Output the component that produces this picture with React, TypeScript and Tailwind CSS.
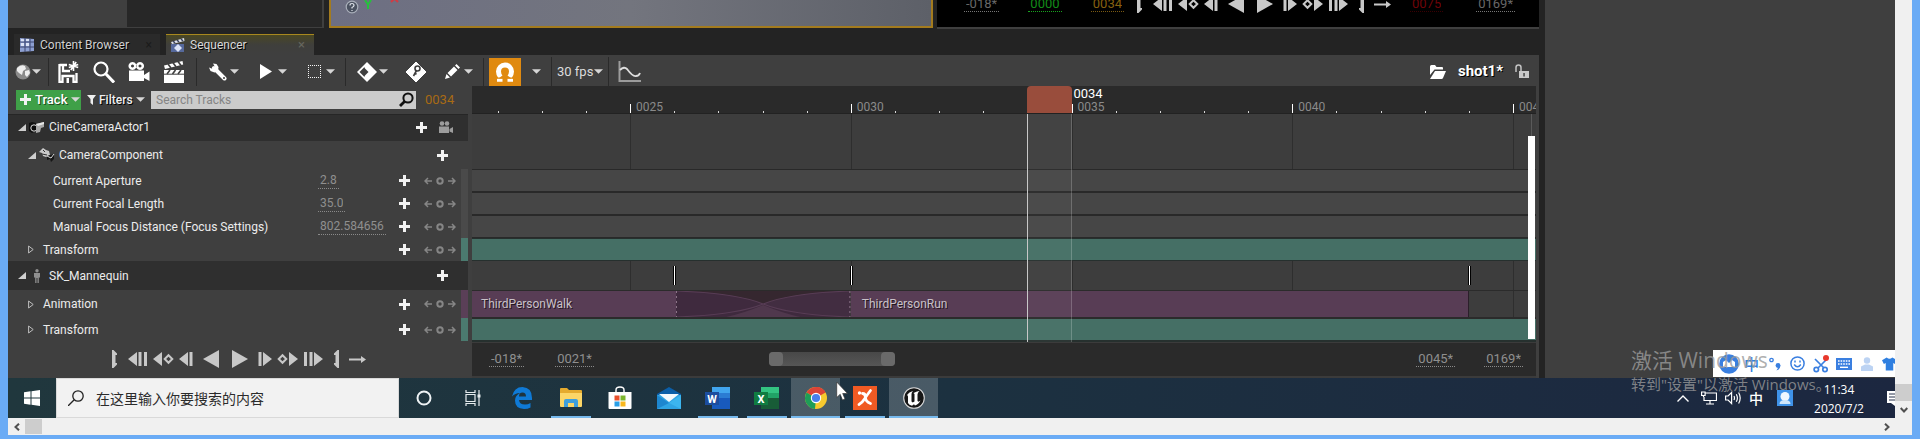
import type { ReactNode } from "react";

const VIEW_START = 21.42;
const VIEW_FRAMES = 24.1;
const pct = (frame: number) => `${((frame - VIEW_START) / VIEW_FRAMES) * 100}%`;
const span = (frames: number) => `${(frames / VIEW_FRAMES) * 100}%`;

const FRAMES = Array.from({ length: 24 }, (_, i) => 22 + i);

/* ---------- small shared pieces ---------- */

function Caret() {
  return (
    <svg className="h-[5px] w-[9px] shrink-0" viewBox="0 0 10 5" fill="#d6d6d6">
      <path d="M0 0h10L5 5z" />
    </svg>
  );
}

function Plus() {
  return (
    <svg className="h-[11px] w-[11px] shrink-0" viewBox="0 0 11 11" fill="#f2f2f2">
      <path d="M4 0h3v4h4v3H7v4H4V7H0V4h4z" />
    </svg>
  );
}

function Separator() {
  return <div className="mx-[2px] h-7 w-px shrink-0 bg-[#2a2a2a]" />;
}

function ToolButton({ label, children }: { label: string; children: ReactNode }) {
  return (
    <button aria-label={label} className="flex h-full w-[35px] shrink-0 items-center justify-center">
      {children}
    </button>
  );
}

function SplitButton({ label, children }: { label: string; children: ReactNode }) {
  return (
    <button aria-label={label} className="flex h-full w-12 shrink-0 items-center gap-px pl-2">
      <span className="flex w-[22px] justify-center">{children}</span>
      <Caret />
    </button>
  );
}

function TimeField({ label, value, tone }: { label: string; value: string; tone: string }) {
  return (
    <input
      aria-label={label}
      defaultValue={value}
      className={`field-sizing-content h-4 border-b border-dotted bg-transparent px-[2px] text-[13px] leading-[14px] outline-none ${tone}`}
    />
  );
}

/* ---------- transport ---------- */

function TransportButton({ label, children }: { label: string; children: ReactNode }) {
  return (
    <button aria-label={label} className="block shrink-0">
      {children}
    </button>
  );
}

function Bracket({ flip }: { flip?: boolean }) {
  return (
    <svg className={`block h-[18px] w-[6px] ${flip ? "-scale-x-100" : ""}`} viewBox="0 0 6 18" fill="#c8c8c8">
      <path d="M0 0h1.500L5 3.500v1.500H3.500v8H5v1.500L1.500 18H0z" />
    </svg>
  );
}

function JumpIcon({ flip }: { flip?: boolean }) {
  return (
    <svg className={`block h-[18px] w-5 ${flip ? "-scale-x-100" : ""}`} viewBox="0 0 20 18" fill="#c8c8c8">
      <path d="M0 9L9 2v14zM10.500 2h3v14h-3zM16 2h3v14h-3z" />
    </svg>
  );
}

function KeyStepIcon({ flip }: { flip?: boolean }) {
  return (
    <svg className={`block h-[18px] w-[21px] ${flip ? "-scale-x-100" : ""}`} viewBox="0 0 21 18" fill="#c8c8c8">
      <path d="M0 9l9-7v14z" />
      <path d="M15.500 5.200L19.300 9l-3.800 3.800L11.700 9z" fill="none" stroke="#c8c8c8" strokeWidth="2" />
    </svg>
  );
}

function StepIcon({ flip }: { flip?: boolean }) {
  return (
    <svg className={`block h-[18px] w-[14px] ${flip ? "-scale-x-100" : ""}`} viewBox="0 0 14 18" fill="#c8c8c8">
      <path d="M0 9l9-7v14zM10.500 2h3v14h-3z" />
    </svg>
  );
}

function PlayIcon({ flip }: { flip?: boolean }) {
  return (
    <svg className={`block h-[18px] w-4 ${flip ? "-scale-x-100" : ""}`} viewBox="0 0 16 18" fill="#c8c8c8">
      <path d="M0 0l16 9L0 18z" />
    </svg>
  );
}

function Transport() {
  return (
    <div className="flex shrink-0 items-center gap-[10px]">
      <TransportButton label="Set range start"><Bracket /></TransportButton>
      <div className="flex gap-[5px]">
        <TransportButton label="Jump to front"><JumpIcon /></TransportButton>
        <TransportButton label="Previous key"><KeyStepIcon /></TransportButton>
        <TransportButton label="Step back"><StepIcon /></TransportButton>
      </div>
      <TransportButton label="Play reverse"><PlayIcon flip /></TransportButton>
      <div className="ml-[3px]">
        <TransportButton label="Play"><PlayIcon /></TransportButton>
      </div>
      <div className="flex gap-[5px]">
        <TransportButton label="Step forward"><StepIcon flip /></TransportButton>
        <TransportButton label="Next key"><KeyStepIcon flip /></TransportButton>
        <TransportButton label="Jump to end"><JumpIcon flip /></TransportButton>
      </div>
      <TransportButton label="Set range end"><Bracket flip /></TransportButton>
      <TransportButton label="No looping">
        <svg className="block h-[18px] w-[17px]" viewBox="0 0 17 18" fill="#c8c8c8">
          <path d="M0 8.500h12V6l5 3.500-5 3.500v-2.500H0z" />
        </svg>
      </TransportButton>
    </div>
  );
}

/* ---------- upper editor panels ---------- */

function UpperPanels() {
  return (
    <div className="flex h-[29px] overflow-hidden bg-[#232323]">
      <div className="h-7 w-[119px] shrink-0 bg-[#3f3f3f]" />
      <div className="h-7 w-[197px] shrink-0 border-r-2 border-b border-[#3f3f3f] bg-[#272727]" />
      <div className="ml-[5px] flex h-7 w-[604px] shrink-0 items-start gap-[5px] border-x-2 border-b-2 border-[#a37b1e] bg-linear-to-r from-[#6d6f83] via-[#73757e] to-[#5d6068] pl-[14px]">
        <svg className="h-[14px] w-[14px]" viewBox="0 0 14 14">
          <circle cx="7" cy="7" r="5.800" fill="#4b5261" stroke="#a9afba" strokeWidth="1.200" />
          <path d="M5 5.500q0-2 2-2t2 2q0 1-2 2v1M7 10v1" stroke="#dfe3ea" fill="none" strokeWidth="1.200" />
        </svg>
        <svg className="h-3 w-10" viewBox="0 0 40 12" fill="none">
          <path d="M1 0l3 4.500L7 0M4 4v5" stroke="#25c13c" strokeWidth="2" />
          <path d="M27 2l3-3M34 2l-3-3" stroke="#d23b43" strokeWidth="2" />
        </svg>
      </div>
      <div className="ml-[4px] flex h-[29px] w-[603px] shrink-0 items-start border-r border-b-2 border-[#3f3f3f] bg-black">
        <div className="-mt-1 flex w-[200px] shrink-0 justify-between pl-[27px] pr-[13px]">
          <TimeField label="Working range start" value="-018*" tone="border-[#777] text-[#686868]" />
          <TimeField label="Playback start" value="0000" tone="border-[#18a51e] text-[#128c18]" />
          <TimeField label="Current frame" value="0034" tone="border-[#7b5a12] text-[#86610f]" />
        </div>
        <div className="-mt-[5px]">
          <Transport />
        </div>
        <div className="-mt-1 flex flex-1 justify-between pl-[19px] pr-[24px]">
          <TimeField label="Playback end" value="0075" tone="border-[#3a0003] text-[#6f0408]" />
          <TimeField label="Working range end" value="0169*" tone="border-[#777] text-[#686868]" />
        </div>
      </div>
    </div>
  );
}

/* ---------- tabs ---------- */

function Tabs() {
  return (
    <div className="flex h-[26px] items-end gap-[6px] bg-[#232323] pl-[6px] pt-[5px] text-xs" role="tablist">
      <button role="tab" aria-selected="false" className="flex h-[21px] w-[146px] items-center bg-[#2a2a2a] pl-[5px] text-[#d0d0d0]">
        <svg className="mr-[5px] h-4 w-4" viewBox="0 0 16 16">
          <path d="M1 1l14 1v12L1 15z" fill="#8d9fd0" />
          <path d="M1 5h14M1 10h14M6 1v14M11 1v14" stroke="#3c4670" strokeWidth="1" />
          <path d="M2 2l3 .2v2H2zM7 2h3v2H7zM2 6h3v3H2zM7 6h3v3H7z" fill="#dbe2f5" />
        </svg>
        <span className="[text-shadow:1px_1px_0_#000]">Content Browser</span>
        <span className="ml-auto pr-2 text-[#1b1b1b]">×</span>
      </button>
      <button role="tab" aria-selected="true" className="flex h-[21px] w-[148px] items-center border-t border-[#a8881f] bg-linear-to-b from-[#4a4722] via-[#3f3f3c] to-[#3f3f3f] pl-[4px] text-[#d8d8d8]">
        <svg className="mr-[5px] h-4 w-[15px]" viewBox="0 0 15 16">
          <path d="M1 5l13-4 .5 3L2 7z" fill="#dfe3ee" />
          <path d="M3 4l2 2M7 3l2 2M11 2l2 2" stroke="#39415c" strokeWidth="1.500" />
          <path d="M1 7h13v8H1z" fill="#56699c" />
          <path d="M8 7l4 4-4 4-4-4z" fill="#dbe4f8" />
        </svg>
        <span className="[text-shadow:1px_1px_0_#000]">Sequencer</span>
        <span className="ml-auto pr-[9px] text-[13px] text-[#66665e]">×</span>
      </button>
    </div>
  );
}

/* ---------- sequencer toolbar ---------- */

function Toolbar() {
  return (
    <div className="flex h-[31px] items-center bg-[#3f3f3f] pt-[2px] text-[13px] text-[#dcdcdc]">
      <button aria-label="World" className="flex h-full w-[38px] shrink-0 items-center gap-px pl-[7px]">
        <svg className="h-4 w-4" viewBox="0 0 16 16">
          <circle cx="8" cy="8" r="7.500" fill="#8a8a8a" />
          <path d="M2 4q4-4 8-2l1 3-3 2-1 4-3-2-2-2zM10 7l4-1 1 3-3 4-2-2z" fill="#ededed" />
        </svg>
        <Caret />
      </button>
      <Separator />
      <ToolButton label="Save sequence">
        <svg className="h-[22px] w-[21px]" viewBox="0 0 21 22">
          <path d="M1.500 4H9M1.500 3v18h3v-6h11v6h3v-9M5 4v6h7" fill="none" stroke="#fff" strokeWidth="2.300" />
          <path d="M8.500 17h2.500v5H8.500z" fill="#fff" />
          <path d="M15.500 0v10M10.800 3.500l9.400 3M20.200 3.500l-9.400 3M12.800 9l5.400-8" stroke="#fff" strokeWidth="1.600" />
        </svg>
      </ToolButton>
      <ToolButton label="Find in content browser">
        <svg className="h-[22px] w-[22px]" viewBox="0 0 22 22" fill="none" stroke="#fff">
          <circle cx="8" cy="8" r="6.500" strokeWidth="2.200" />
          <path d="M12.500 12.500L21 21.500" strokeWidth="3" />
        </svg>
      </ToolButton>
      <ToolButton label="Create camera">
        <svg className="h-5 w-[22px]" viewBox="0 0 22 20" fill="#fff">
          <path d="M4.500 0a4 4 0 1 0 .01 0zm0 2.500a1.500 1.500 0 1 1-.01 0zM12 0a4 4 0 1 0 .01 0zm0 2.500a1.500 1.500 0 1 1-.01 0z" fillRule="evenodd" />
          <path d="M1 8.500h15V19H1zM16 13l5.500-3.500V19L16 16z" />
        </svg>
      </ToolButton>
      <ToolButton label="Render movie">
        <svg className="h-[22px] w-5" viewBox="0 0 20 22">
          <path d="M0 9h20v13H0z" fill="#fff" />
          <path d="M0 4.500L18.500 0l.7 3.500L1 8z" fill="#fff" />
          <path d="M4 3l3 4M9 1.800l3 4M14 .6l3 4M3 13l3-4M8.500 13l3-4M14 13l3-4" stroke="#3f3f3f" strokeWidth="1.600" />
          <path d="M0 13.200h20" stroke="#3f3f3f" strokeWidth="1" />
        </svg>
      </ToolButton>
      <div className="w-[3px]" />
      <Separator />
      <SplitButton label="General options">
        <svg className="h-[18px] w-[18px]" viewBox="0 0 18 18">
          <path d="M5 5l10.500 10.500" stroke="#fff" strokeWidth="4" strokeLinecap="round" />
          <path d="M4 .5L7.500 1 9.500 4 9 8 5.500 9.500 1.500 8 0 4.500 4 6l2-2z" fill="#fff" />
          <circle cx="15" cy="15" r="1" fill="#3f3f3f" />
        </svg>
      </SplitButton>
      <SplitButton label="Playback options">
        <svg className="h-[15px] w-3" viewBox="0 0 12 15" fill="#fff"><path d="M0 0l12 7.500L0 15z" /></svg>
      </SplitButton>
      <SplitButton label="Selection range">
        <svg className="h-[13px] w-[13px]" viewBox="0 0 13 13" fill="none" stroke="#f5f5f5">
          <path d="M0 .5h13M0 12.500h13M.5 0v13M12.500 0v13" strokeDasharray="1 1" />
        </svg>
      </SplitButton>
      <Separator />
      <SplitButton label="Key options">
        <svg className="h-[22px] w-[22px] shrink-0" viewBox="0 0 22 22">
          <path d="M11 1l10 10-10 10L1 11z" fill="#fff" />
          <path d="M8.500 6v10L3.500 11z" fill="#3f3f3f" /><path d="M8 6.500l4.500 4.500L8 15.500z" fill="#3f3f3f" />
        </svg>
      </SplitButton>
      <ToolButton label="Auto key">
        <svg className="ml-1 h-[22px] w-[22px] shrink-0" viewBox="0 0 22 22">
          <path d="M11 1l10 10-10 10L1 11z" fill="#fff" stroke="#fff" strokeLinejoin="round" />
          <circle cx="12.500" cy="7.500" r="2.500" fill="none" stroke="#3f3f3f" strokeWidth="1.600" />
          <path d="M11.500 9.500L8.500 15M9.500 12l2 1.200" stroke="#3f3f3f" strokeWidth="1.600" />
        </svg>
      </ToolButton>
      <div className="w-[2px]" />
      <SplitButton label="Edit options">
        <svg className="h-[15px] w-[15px]" viewBox="0 0 15 15" fill="#fff">
          <path d="M0 15l1.500-5 3.500 3.500zM2.500 9L9 2.500 12.500 6 6 12.500zM10 1.500L11.500 0 15 3.500 13.500 5z" />
        </svg>
      </SplitButton>
      <Separator />
      <button aria-label="Snapping" aria-pressed="true" className="ml-[3px] flex h-7 w-8 items-center justify-center self-end bg-[#e08a10]">
        <svg className="h-5 w-5" viewBox="0 0 20 20">
          <path d="M5.500 15Q3.500 12.500 3.500 9.500a6.500 6.500 0 0 1 13 0q0 3-2 5.500" fill="none" stroke="#fff" strokeWidth="5" />
          <path d="M2 18.200h5.500M12.500 18.200H18" stroke="#fff" strokeWidth="3" />
          <path d="M1 16h8M11 16h8" stroke="#e08a10" strokeWidth="1" />
        </svg>
      </button>
      <button aria-label="Snapping options" className="flex h-full w-[30px] items-center justify-center"><Caret /></button>
      <button className="flex h-full items-center gap-px border-x border-[#2a2a2a] px-[5px]">
        <span>30 fps</span>
        <Caret />
      </button>
      <button aria-label="Curve editor" className="ml-[9px]">
        <svg className="h-[21px] w-[23px]" viewBox="0 0 23 21" fill="none">
          <path d="M1.500 0v20H23" stroke="#9c9c9c" strokeWidth="2" />
          <path d="M2 9q4-4 7-1 6 8 9 7 3 0 4-3" stroke="#dedede" strokeWidth="1.800" />
        </svg>
      </button>
      <div className="ml-auto flex items-center gap-3 pr-[10px]">
        <button aria-label="Browse sequences">
          <svg className="block h-[14px] w-4" viewBox="0 0 16 14" fill="#fff">
            <path d="M0 1.500Q0 0 1.500 0H5l1.500 2H12q1 0 1 1v1.500H4.500L0 10z" />
            <path d="M5 6h11l-3 7q-.4 1-1.500 1H0z" />
          </svg>
        </button>
        <button className="text-[15px] font-bold text-white [text-shadow:1px_1px_0_#000]">shot1*</button>
        <button aria-label="Lock sequence">
          <svg className="block h-[15px] w-[14px]" viewBox="0 0 14 15">
            <path d="M1 8V3.500Q1 1 3.500 1T6 3.500V8" fill="none" stroke="#c4c4c4" strokeWidth="1.500" />
            <path d="M4 7h10v7H4z" fill="#c9c9c9" /><path d="M8.300 9h1.500v3.500H8.300z" fill="#444" />
          </svg>
        </button>
      </div>
    </div>
  );
}

/* ---------- outliner ---------- */

function FilterRow() {
  return (
    <div className="flex h-7 items-center bg-[#3f3f3f] pb-px pl-2 text-[13px]">
      <button className="flex h-5 w-[65px] items-center gap-[4px] bg-[#3fa048] pl-1 text-white [text-shadow:1px_1px_0_#1c4d20]">
        <Plus />
        <span className="font-medium">Track</span>
        <Caret />
      </button>
      <button className="ml-[6px] flex w-16 items-center gap-[3px] text-xs text-[#efefef] [text-shadow:1px_1px_0_#000]">
        <svg className="h-[10px] w-[9px] shrink-0" viewBox="0 0 9 10" fill="#efefef"><path d="M0 0h9L6 4v6L3.500 8V4z" /></svg>
        <span className="font-medium">Filters</span>
        <Caret />
      </button>
      <div className="flex h-[18px] flex-1 items-center bg-[#cbcbcb] pr-[2px]">
        <input aria-label="Search Tracks" placeholder="Search Tracks" className="h-full min-w-0 flex-1 bg-transparent pl-[5px] text-xs placeholder-[#858585] outline-none" />
        <svg className="h-[15px] w-[15px]" viewBox="0 0 15 15" fill="none" stroke="#111">
          <circle cx="9" cy="6" r="4.600" strokeWidth="2" />
          <path d="M5.800 9.200L1 14" strokeWidth="2.800" />
        </svg>
      </div>
      <span className="w-14 shrink-0 pl-[9px] text-[#a86a14]">0034</span>
    </div>
  );
}

function Expanded() {
  return <svg className="h-[7px] w-2 shrink-0" viewBox="0 0 8 7" fill="#cfcfcf"><path d="M8 0v7H0z" /></svg>;
}

function Collapsed() {
  return <svg className="h-[9px] w-[6px] shrink-0" viewBox="0 0 6 9" fill="none" stroke="#bdbdbd"><path d="M.6 1v7l4.600-3.500z" /></svg>;
}

function KeyNav() {
  return (
    <div className="flex w-8 shrink-0 justify-between">
      <button aria-label="Previous key">
        <svg className="block h-2 w-2" viewBox="0 0 8 8" fill="none" stroke="#868686" strokeWidth="1.500"><path d="M8 4H1M4 1L1 4l3 3" /></svg>
      </button>
      <button aria-label="Add key">
        <svg className="block h-2 w-2" viewBox="0 0 8 8" fill="none" stroke="#868686" strokeWidth="2"><circle cx="4" cy="4" r="2.700" /></svg>
      </button>
      <button aria-label="Next key">
        <svg className="block h-2 w-2" viewBox="0 0 8 8" fill="none" stroke="#868686" strokeWidth="1.500"><path d="M0 4h7M4 1l3 3-3 3" /></svg>
      </button>
    </div>
  );
}

function TrackRow({ name, value, height, strip, nested }: { name: string; value?: string; height: string; strip: string; nested?: boolean }) {
  return (
    <div className={`flex items-center ${height}`}>
      <div className={`flex w-[310px] shrink-0 items-center ${nested ? "pl-[45px]" : "gap-[9px] pl-5"}`}>
        {!nested && <Collapsed />}
        <span>{name}</span>
      </div>
      <div className="w-[81px] shrink-0">
        {value && (
          <input
            aria-label={name}
            defaultValue={value}
            className="field-sizing-content block h-4 border-b border-dotted border-[#8a8a8a] bg-transparent px-[2px] text-[#8f8f8f] outline-none"
          />
        )}
      </div>
      <button aria-label={`Add to ${name}`} className="mr-[14px]"><Plus /></button>
      <KeyNav />
      <div className={`ml-auto mr-1 w-[7px] self-stretch ${strip}`} />
    </div>
  );
}

function Outliner() {
  return (
    <div className="flex w-[464px] shrink-0 flex-col bg-[#3f3f3f] text-xs text-[#ececec]">
      <FilterRow />
      <div className="mr-1 flex h-[27px] items-center border-t border-[#262626] bg-[#2f2f2f] pb-[2px] pl-[10px]">
        <Expanded />
        <svg className="mx-[3px] h-3 w-4" viewBox="0 0 16 12">
          <path d="M0 2l3-1 4 1v8l-4 2-3-2z" fill="#111" /><circle cx="5" cy="7" r="3.200" fill="#0a0a0a" stroke="#ddd" />
          <path d="M7 3l8-2v5l-3 1-1 4-4 1z" fill="#a9a9a9" /><path d="M7 3l8-2v2L9 5z" fill="#e6e6e6" />
        </svg>
        <span className="pl-[1px]">CineCameraActor1</span>
        <button aria-label="Add to CineCameraActor1" className="ml-auto"><Plus /></button>
        <button aria-label="Lock viewport to camera" className="ml-3 mr-[15px]">
          <svg className="block h-3 w-[14px]" viewBox="0 0 14 12" fill="#9d9d9d">
            <circle cx="3" cy="2.500" r="2.300" /><circle cx="8" cy="2.500" r="2.300" /><path d="M0 5.500h10V12H0zM10.500 8L14 6v6l-3.500-1.500z" />
          </svg>
        </button>
      </div>
      <div className="mr-1 flex h-7 items-center pl-5">
        <Expanded />
        <svg className="mx-[3px] h-[14px] w-4" viewBox="0 0 16 14">
          <path d="M0 4l4-4 3 2 3 1 1 4-4 2-3-1-1-3z" fill="#c9c9c9" /><path d="M4 2l2 2M3 6l5 1" stroke="#333" />
          <path d="M8 8l7-2v5l-3 3-1-3-3 1z" fill="#161616" /><path d="M8 8l4 2 3-4" stroke="#ddd" fill="none" />
        </svg>
        <span className="pl-[1px]">CameraComponent</span>
        <button aria-label="Add to CameraComponent" className="ml-auto mr-5"><Plus /></button>
      </div>
      <TrackRow name="Current Aperture" value="2.8" height="h-[23px]" strip="bg-[#4a4a4a]" nested />
      <TrackRow name="Current Focal Length" value="35.0" height="h-[23px]" strip="bg-[#4a4a4a]" nested />
      <TrackRow name="Manual Focus Distance (Focus Settings)" value="802.584656" height="h-[23px]" strip="bg-[#4a4a4a]" nested />
      <TrackRow name="Transform" height="h-[23px]" strip="bg-[#4b7a6f]" />
      <div className="mr-1 flex h-[29px] items-center bg-[#2f2f2f] pl-[10px]">
        <Expanded />
        <svg className="ml-[7px] mr-2 h-[14px] w-2" viewBox="0 0 8 14" fill="#8f8f8f">
          <circle cx="4" cy="1.800" r="1.700" /><path d="M1 4h6v4.500H5.800V14H4.500V9h-1v5H2.200V8.500H1z" />
        </svg>
        <span>SK_Mannequin</span>
        <button aria-label="Add to SK_Mannequin" className="ml-auto mr-5"><Plus /></button>
      </div>
      <TrackRow name="Animation" height="h-[28px]" strip="bg-[#5a3f57]" />
      <TrackRow name="Transform" height="h-[23px]" strip="bg-[#4b7a6f]" />
      <div className="flex h-[37px] items-center pb-px pl-[104px]">
        <Transport />
      </div>
    </div>
  );
}

/* ---------- timeline ---------- */

function Ruler() {
  return (
    <div className="relative h-7 overflow-hidden border-b border-[#222] bg-[#2a2a2a]">
      {FRAMES.map((f) => (
        <div key={f} className="absolute bottom-0 flex items-end" style={{ left: pct(f) }}>
          <div className={f % 5 === 0 ? "h-[9px] w-px bg-white" : "h-[2px] w-px bg-[#d8d8d8]"} />
          {f % 5 === 0 && <span className="pl-[5px] text-xs leading-3 text-[#8a8a8a]">{f === 45 ? "004" : `00${f}`}</span>}
        </div>
      ))}
      <div className="absolute inset-y-0 flex rounded-t-sm bg-[#994d3c]" style={{ left: pct(34), width: span(1) }}>
        <span className="pl-[46px] text-[13px] leading-4 text-white">0034</span>
      </div>
    </div>
  );
}

function Tracks() {
  return (
    <div className="relative flex flex-col overflow-hidden bg-[#3d3d3d]">
      {[25, 30, 35, 40, 45].map((f) => (
        <div key={f} className="absolute inset-y-0 w-px bg-[#2e2e2e]" style={{ left: pct(f) }} />
      ))}
      <div className="h-[55px]" />
      <div className="relative h-[23px] border-y border-[#292929] bg-[#464646]" />
      <div className="relative h-[23px] border-y border-[#292929] bg-[#464646]" />
      <div className="relative h-[23px] border-y border-[#292929] bg-[#464646]" />
      <div className="relative h-[23px] border-y border-[#26302e] bg-[#456f65]" />
      <div className="relative h-[29px]">
        {[26, 30, 44].map((f) => (
          <div key={f} className="absolute top-[5px] h-[19px] w-[3px] -translate-x-px border-x border-black bg-white" style={{ left: pct(f) }} />
        ))}
      </div>
      <div className="relative h-[29px] border-t border-b-2 border-[#2b2b2b]">
        <div className="flex h-full items-center text-xs text-[#c9c1c8] [text-shadow:1px_1px_0_#241722]">
          <div className="flex h-full items-center bg-[#583d55] pl-[9px]" style={{ width: pct(26.05) }}>ThirdPersonWalk</div>
          <svg className="h-full" style={{ width: span(3.95) }} viewBox="0 0 174 26" preserveAspectRatio="none">
            <path d="M0 0h174v26H0z" fill="#422d41" />
            <path d="M0 0Q60 2 87 13T174 26H0z" fill="#3f2a3e" />
            <path d="M0 0Q55 1 87 13Q120 1 174 0z" fill="#35272f" />
            <path d="M50 26Q68 22 87 14Q106 22 124 26z" fill="#50384d" />
            <path d="M0 0Q60 2 87 13T174 26M174 0Q114 2 87 13T0 26" fill="none" stroke="#583d55" />
            <path d="M.5 0v26M173.500 0v26" stroke="#8c7488" strokeDasharray="2 3" />
          </svg>
          <div className="flex h-full items-center border-r border-[#2b1f2a] bg-[#583d55] pl-[11px]" style={{ width: span(14) }}>ThirdPersonRun</div>
        </div>
      </div>
      <div className="relative h-[23px] border-b-2 border-[#26302e] bg-[#456f65]" />
      <div className="absolute inset-y-0 border-l border-r border-l-[#c8c8c8] border-r-white/20 bg-white/[0.03]" style={{ left: pct(34), width: span(1) }} />
      <div className="absolute bottom-[3px] right-px top-0 flex w-[7px] flex-col items-center">
        <div className="h-[22px] w-px bg-[#5a5a5a]" />
        <div className="w-full flex-1 bg-white" />
      </div>
    </div>
  );
}

function RangeBar() {
  const tone = "border-[#8a8a8a] text-[#8f8f8f]";
  return (
    <div className="flex h-9 items-center border-b-2 border-t border-[#3b3b3b] bg-[#2a2a2a] pb-px pl-[17px] pr-[13px]">
      <div className="flex w-[280px] shrink-0 gap-[31px]">
        <TimeField label="Range start" value="-018*" tone={tone} />
        <TimeField label="View start" value="0021*" tone={tone} />
      </div>
      <div className="flex h-[14px] w-[126px] justify-between rounded-sm bg-linear-to-b from-[#484848] to-[#565656]">
        <div className="w-[14px] rounded-sm bg-[#6a6a6a]" />
        <div className="w-[14px] rounded-sm bg-[#6a6a6a]" />
      </div>
      <div className="ml-auto flex gap-[29px]">
        <TimeField label="View end" value="0045*" tone={tone} />
        <TimeField label="Range end" value="0169*" tone={tone} />
      </div>
    </div>
  );
}

/* ---------- taskbar ---------- */

function TaskItem({ label, mark, active, children }: { label: string; mark?: boolean; active?: boolean; children: ReactNode }) {
  return (
    <button aria-label={label} className={`flex h-10 w-[49px] shrink-0 flex-col items-center ${active ? "bg-white/20" : ""}`}>
      <span className="flex flex-1 items-center pt-[2px]">{children}</span>
      <span className={`h-[2px] ${mark ? "bg-[#76b9ed]" : ""} ${active ? "w-full" : "w-10"}`} />
    </button>
  );
}

function OfficeIcon({ letter, light, mid, dark, badge }: { letter: string; light: string; mid: string; dark: string; badge: string }) {
  return (
    <svg className="h-6 w-[26px]" viewBox="0 0 26 24">
      <path d="M7 1h18v6H7z" fill={light} /><path d="M7 7h18v5H7z" fill={mid} />
      <path d="M7 12h18v11H7z" fill={dark} />
      <path d="M0 6h14v13H0z" fill={badge} />
      <text x="7" y="16.500" textAnchor="middle" fill="#fff" fontSize="11" fontWeight="700" fontFamily="Roboto, sans-serif">{letter}</text>
    </svg>
  );
}

function Taskbar() {
  return (
    <div className="flex h-10 items-stretch bg-linear-to-r from-[#20373d] via-[#1c3140] to-[#1c2740]">
      <button aria-label="Start" className="flex w-12 shrink-0 items-center justify-center">
        <svg className="h-4 w-4" viewBox="0 0 16 16" fill="#fff">
          <path d="M0 2.200L6.500 1.300V7.500H0zM7.500 1.200L16 0v7.500H7.500zM0 8.500h6.500v6.200L0 13.800zM7.500 8.500H16V16l-8.500-1.200z" />
        </svg>
      </button>
      <div className="flex w-[343px] shrink-0 items-center border border-[#d9d9d9] bg-[#f2f2f2] pl-[11px]">
        <svg className="h-4 w-4" viewBox="0 0 16 16" fill="none" stroke="#222" strokeWidth="1.300">
          <circle cx="10" cy="6" r="5.200" /><path d="M6.200 9.800L0 16" />
        </svg>
        <input
          aria-label="搜索"
          placeholder="在这里输入你要搜索的内容"
          className="ml-3 min-w-0 flex-1 bg-transparent font-['Noto_Sans_CJK_SC',sans-serif] text-sm placeholder-[#2b2b2b] outline-none"
        />
      </div>
      <TaskItem label="Cortana">
        <svg className="h-4 w-4" viewBox="0 0 16 16" fill="none" stroke="#eef3f5" strokeWidth="2"><circle cx="8" cy="8" r="6.500" /></svg>
      </TaskItem>
      <TaskItem label="Task view">
        <svg className="h-4 w-4" viewBox="0 0 16 16" fill="none" stroke="#e6ecee" strokeWidth="1.200">
          <path d="M1 4.500h9v7H1zM1 0v2.500h9V0M1 16v-2.500h9V16M14 0v16" /><path d="M12.500 4.500h3v3h-3z" fill="#e6ecee" stroke="none" />
        </svg>
      </TaskItem>
      <TaskItem label="Edge">
        <svg className="h-[22px] w-[22px]" viewBox="0 0 22 22">
          <path d="M1 9.500Q3 0 11.500 0 21 .5 21 11v2H8q.5 4.500 6 4.500 3 0 5.500-1.500v4.500Q17 22 13 22 4 21.500 4 13.500 4 8.500 9 6 4 6 1 9.500zM8 9.500h7Q15 5.500 11.500 5.500T8 9.500z" fill="#0f7ad6" fillRule="evenodd" />
        </svg>
      </TaskItem>
      <TaskItem label="File explorer" mark>
        <svg className="h-5 w-[22px]" viewBox="0 0 22 20">
          <path d="M0 1q0-1 1-1h6l2 2h12q1 0 1 1v15H0z" fill="#e5ab2e" /><path d="M0 5h22v13q0 1-1 1H1q-1 0-1-1z" fill="#fcd667" />
          <path d="M4 19v-6q0-2 2-2h10q2 0 2 2v6h-4v-4H8v4z" fill="#3f9fdc" />
        </svg>
      </TaskItem>
      <TaskItem label="Store">
        <svg className="h-6 w-6" viewBox="0 0 24 24">
          <path d="M8 6V4q0-3 4-3t4 3v2" fill="none" stroke="#fff" strokeWidth="1.400" /><path d="M.5 6h23v16q0 1-1 1h-21q-1 0-1-1z" fill="#fff" />
          <path d="M6.500 9.500h5v5h-5z" fill="#e8502c" /><path d="M12.500 9.500h5v5h-5z" fill="#7cb62d" />
          <path d="M6.500 15.500h5v5h-5z" fill="#2b9fe6" /><path d="M12.500 15.500h5v5h-5z" fill="#f9b81d" />
        </svg>
      </TaskItem>
      <TaskItem label="Mail">
        <svg className="h-[22px] w-6" viewBox="0 0 24 22">
          <path d="M0 7l12-7 12 7v3H0z" fill="#0b5ea8" /><path d="M0 8h24v14H0z" fill="#2fa4e4" />
          <path d="M2 7h20l-10 8z" fill="#f3f8fc" /><path d="M0 8l12 8L0 22z" fill="#1d86cf" /><path d="M24 8l-12 8 12 6z" fill="#3cb5ef" />
        </svg>
      </TaskItem>
      <TaskItem label="Word" mark><OfficeIcon letter="W" light="#41a5ee" mid="#2b7cd3" dark="#185abd" badge="#1c4d9e" /></TaskItem>
      <TaskItem label="Excel" mark><OfficeIcon letter="X" light="#33c481" mid="#21a366" dark="#185c37" badge="#107c41" /></TaskItem>
      <TaskItem label="Chrome" mark active>
        <svg className="h-[22px] w-[22px]" viewBox="0 0 22 22">
          <circle cx="11" cy="11" r="11" fill="#f7c92e" />
          <path d="M11 11L1.500 5.500A11 11 0 0 1 20.500 5.500z" fill="#dc4437" />
          <path d="M11 0a11 11 0 0 1 9.500 5.500H11z" fill="#dc4437" />
          <path d="M1.500 5.500L11 11l0 0-1 11A11 11 0 0 1 1.500 5.500z" fill="#1e9d58" />
          <circle cx="11" cy="11" r="5.200" fill="#fff" /><circle cx="11" cy="11" r="4.100" fill="#4a80ec" />
        </svg>
      </TaskItem>
      <TaskItem label="XMind" mark>
        <svg className="h-6 w-6" viewBox="0 0 24 24">
          <path d="M0 0h24v24H0z" fill="#f05a23" />
          <path d="M17.500 4.500Q14 9 11.500 13T6 18.500M9.500 7.500q3 0 3 4t5 6" stroke="#fff" strokeWidth="2.800" fill="none" strokeLinecap="round" />
          <circle cx="6.500" cy="7" r="1.700" fill="#fff" />
        </svg>
      </TaskItem>
      <TaskItem label="Unreal Engine" mark active>
        <svg className="h-[22px] w-[22px]" viewBox="0 0 22 22">
          <circle cx="11" cy="11" r="10.300" fill="#161616" stroke="#d8d8d8" strokeWidth="1.100" />
          <path d="M4 8q2-3 6-4-1.500 1.500-1.500 3v7.500l1.200 1 1.800-1V7l-1-1q4-2 6-2-2 1.500-2 3.500V14l1 .8 2-1.300q-2 4-5.500 5l-1-1.200-2 1.500Q6 18 5 16V9.500q-.3-1.500-1-1.500z" fill="#fff" />
        </svg>
      </TaskItem>

      <div className="ml-auto flex items-center text-white">
        <button aria-label="Show hidden icons" className="w-6">
          <svg className="h-[7px] w-3" viewBox="0 0 12 7" fill="none" stroke="#fff" strokeWidth="1.400"><path d="M.5 6.500L6 1l5.500 5.500" /></svg>
        </button>
        <svg className="h-[14px] w-4" viewBox="0 0 16 14" fill="none" stroke="#fff" strokeWidth="1.200">
          <path d="M4.500 2h11v7.500H3V6M9 9.500V13M5 13h8M.6 1h3.500v3.500H.6zM2.500 4.500V6" />
        </svg>
        <svg className="ml-2 h-[14px] w-[17px]" viewBox="0 0 17 14" fill="none" stroke="#fff" strokeWidth="1.200">
          <path d="M.6 5v4h2.500l3.500 3.500v-11L3.100 5zM9 5q1 2 0 4M11.300 3.200q2.200 3.800 0 7.600M13.600 1.500q3.200 5.500 0 11" />
        </svg>
        <span className="ml-[7px] font-['Noto_Sans_CJK_SC',sans-serif] text-sm font-medium">中</span>
        <svg className="ml-[14px] h-4 w-4" viewBox="0 0 16 16">
          <path d="M0 0h16v16H0z" fill="#3f93ea" /><circle cx="8" cy="6.500" r="4.500" fill="#eef7ff" /><path d="M2.500 14q0-4 5.500-4t5.500 4z" fill="#cfe6fc" />
        </svg>
        <button className="ml-[18px] w-[56px] pt-px text-center font-['Open_Sans',sans-serif] text-xs leading-[19px]">
          <span className="block">11:34</span>
          <span className="block">2020/7/2</span>
        </button>
        <button aria-label="Notifications" className="ml-[20px]">
          <svg className="block h-[15px] w-[8px]" viewBox="0 0 8 15"><path d="M0 0h8v15L4 12H0z" fill="#fff" /><path d="M2 3h6M2 6h6M2 9h6" stroke="#26304a" /></svg>
        </button>
      </div>
    </div>
  );
}

function ImeBar() {
  return (
    <div className="absolute bottom-10 right-0 mb-px grid h-[27px] w-[182px] auto-cols-[23px] grid-flow-col items-center justify-items-center overflow-hidden bg-white pl-1 text-[#2f7fe0]">
      <svg className="h-5 w-5" viewBox="0 0 20 20"><circle cx="10" cy="10" r="9.800" fill="#3a7fe0" /><path d="M4 13V8l3-2 3 3 3-3 3 2v5z" fill="#fff" /></svg>
      <span className="font-['Noto_Sans_CJK_SC',sans-serif] text-[15px] font-medium leading-5">中</span>
      <svg className="h-[14px] w-3" viewBox="0 0 12 14"><circle cx="2.500" cy="3" r="1.700" fill="none" stroke="#3a7fe0" strokeWidth="1.300" /><circle cx="9" cy="8.500" r="2.400" fill="#3a7fe0" /><path d="M11.400 8.500q0 4-4 5 2-2 2-5z" fill="#3a7fe0" /></svg>
      <svg className="h-[15px] w-[15px]" viewBox="0 0 15 15" fill="none" stroke="#3a7fe0" strokeWidth="1.500"><circle cx="7.500" cy="7.500" r="6.600" /><path d="M4.200 8.500q3.300 4.500 6.600 0M5 4.500v2M10 4.500v2" /></svg>
      <svg className="h-[18px] w-4" viewBox="0 0 16 18" fill="none" stroke="#3a7fe0" strokeWidth="1.700"><path d="M2 4l9 9M13 5l-8 8" /><circle cx="3.300" cy="14.500" r="2.200" /><circle cx="12" cy="14.500" r="2.200" /><circle cx="13" cy="3" r="3" fill="#e8382c" stroke="none" /></svg>
      <svg className="h-3 w-4" viewBox="0 0 16 12"><path d="M0 0h16v12H0z" fill="#3a7fe0" /><path d="M2 3h12M2 6h12" stroke="#fff" strokeWidth="1.500" strokeDasharray="1.600 1" /><path d="M4 9.300h8" stroke="#fff" strokeWidth="1.400" /></svg>
      <svg className="h-[14px] w-3" viewBox="0 0 12 14" fill="#bcd3f3"><circle cx="6" cy="3.500" r="3.200" /><path d="M0 14V9.500l4-2h4l4 2V14z" /></svg>
      <svg className="h-[14px] w-[15px]" viewBox="0 0 16 14" fill="#2f7fe0"><path d="M5 0q3 3 6 0l5 3-2 4-2-1v8H4V6L2 7 0 3z" /></svg>
    </div>
  );
}

/* ---------- page ---------- */

export default function App() {
  return (
    <div className="min-h-screen border-x-8 border-b-4 border-[#6aabf5] bg-[#efefef] font-[Roboto,'Noto_Sans_CJK_SC',sans-serif]">
      <div className="flex">
        <div className="relative min-w-0 flex-1 overflow-hidden bg-[#3f3f3f]">
          <div className="mr-[350px] border-r-6 border-[#232323]">
            <UpperPanels />
            <Tabs />
            <Toolbar />
            <div className="flex">
              <Outliner />
              <div className="mr-[3px] min-w-0 flex-1">
                <Ruler />
                <Tracks />
                <RangeBar />
              </div>
            </div>
          </div>
          <Taskbar />
          <ImeBar />
          <div className="pointer-events-none absolute bottom-[22px] right-[64px] w-[200px] whitespace-nowrap font-['Open_Sans','Noto_Sans_CJK_SC',sans-serif] text-[#9a9a9a]/80">
            <p className="text-[21px] leading-6">激活 Windows</p>
            <p className="text-[15px] leading-6">转到"设置"以激活 Windows。</p>
          </div>
          <svg className="pointer-events-none absolute bottom-[17px] left-[828px] h-5 w-3" viewBox="0 0 12 20">
            <path d="M.7 1v15.500l3.500-3.200L6.500 19l2.500-1-2.300-5.500h4.800z" fill="#fff" stroke="#333" strokeWidth=".7" />
          </svg>
        </div>
        <div className="flex w-[17px] shrink-0 flex-col items-center justify-end bg-[#f0f0f0]">
          <div className="h-[17px] w-full bg-[#cdcdcd]" />
          <button aria-label="Scroll down" className="flex h-[17px] w-full items-center justify-center">
            <svg className="h-[6px] w-2" viewBox="0 0 8 6" fill="none" stroke="#505050" strokeWidth="2"><path d="M.7 1L4 4.500 7.300 1" /></svg>
          </button>
        </div>
      </div>
      <div className="flex h-[17px] items-center bg-[#f0f0f0] pr-[17px]">
        <button aria-label="Scroll left" className="flex w-[17px] justify-center">
          <svg className="h-2 w-[6px]" viewBox="0 0 6 8" fill="none" stroke="#505050" strokeWidth="2"><path d="M5 .7L1.500 4 5 7.300" /></svg>
        </button>
        <div className="h-[15px] w-[17px] bg-[#cdcdcd]" />
        <button aria-label="Scroll right" className="ml-auto flex w-[17px] justify-center">
          <svg className="h-2 w-[6px]" viewBox="0 0 6 8" fill="none" stroke="#505050" strokeWidth="2"><path d="M1 .7L4.500 4 1 7.300" /></svg>
        </button>
      </div>
    </div>
  );
}
